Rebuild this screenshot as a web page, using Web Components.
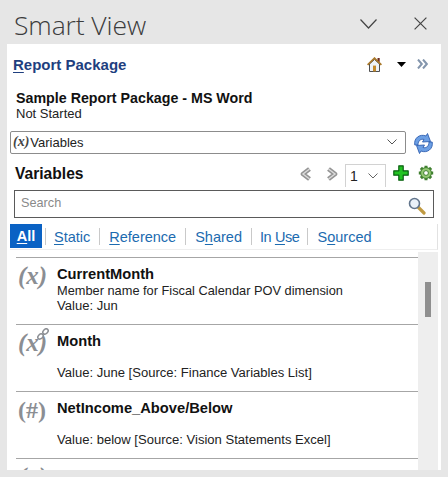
<!DOCTYPE html>
<html>
<head>
<meta charset="utf-8">
<title>Smart View</title>
<style>
  html, body { margin: 0; height: 100%; background: #e6e6e6; }
  body { font-family: 'Open Sans', 'Liberation Sans', sans-serif; overflow: hidden; }
</style>
</head>
<body>
<smart-view>
  <report-header slot="header" package="Sample Report Package - MS Word" status="Not Started"></report-header>
  <variable-combo slot="header"></variable-combo>
  <variables-toolbar slot="header"></variables-toolbar>
  <search-box slot="header"></search-box>
  <filter-tabs slot="header"></filter-tabs>
  <variable-list slot="list">
    <variable-row name="CurrentMonth" kind="x" description="Member name for Fiscal Calendar POV dimension" value="Value: Jun"></variable-row>
    <variable-row name="Month" kind="link" description="" value="Value: June [Source: Finance Variables List]"></variable-row>
    <variable-row name="NetIncome_Above/Below" kind="hash" description="" value="Value: below [Source: Vision Statements Excel]"></variable-row>
    <variable-row name="" kind="x" description="" value=""></variable-row>
  </variable-list>
</smart-view>

<script>
const uiFont = "'Liberation Sans', Arial, sans-serif"

const shellTemplate = document.createElement('template')
shellTemplate.innerHTML = `
  <style>
    :host { display: flex; flex-direction: column; width: 448px; height: 477px; overflow: hidden; }
    #bar { height: 44px; flex: none; display: flex; align-items: center; padding: 0 21px 0 14px; box-sizing: border-box; color: #3c3c3c; }
    #title { font: 300 26.500px/44px 'Open Sans', sans-serif; flex: 1; letter-spacing: -0.1px; padding-top: 3px; height: 44px; box-sizing: border-box; }
    #bar svg { display: block; }
    #collapse { margin-right: 37px; margin-top: 4px; }
    #close { margin-top: 2px; }
    #panel { flex: 1; margin: 0 7px 7px; background: #fff; display: flex; flex-direction: column; min-height: 0; }
    #lower { flex: 1; min-height: 0; display: flex; }
  </style>
  <div id="bar">
    <div id="title">Smart View</div>
    <svg id="collapse" width="17" height="10" viewBox="0 0 17 10"><path d="M.5.500 8.500 9 16.500.500" fill="none" stroke="#444" stroke-width="1.200"/></svg>
    <svg id="close" width="13" height="13" viewBox="0 0 13 13"><path d="M.6.600 12.400 12.400M12.400.600.600 12.400" fill="none" stroke="#444" stroke-width="1.200"/></svg>
  </div>
  <div id="panel">
    <slot name="header"></slot>
    <div id="lower"><slot name="list"></slot></div>
  </div>
`
customElements.define('smart-view', class extends HTMLElement {
  constructor () {
    super()
    this.attachShadow({ mode: 'open' }).appendChild(shellTemplate.content.cloneNode(true))
  }
})

const headerTemplate = document.createElement('template')
headerTemplate.innerHTML = `
  <style>
    :host { display: block; font-family: ${uiFont}; height: 86px; box-sizing: border-box; padding-top: 10px; }
    #top { display: flex; align-items: center; height: 20px; padding: 0 13px 0 6px; }
    #link { flex: 1; font-weight: 700; font-size: 15px; color: #1f3f7f; }
    #link u { text-decoration-thickness: 1px; text-underline-offset: 2px; }
    #home { margin-right: 15px; }
    #caret { margin-right: 11px; }
    #name { margin: 16px 0 0 9px; font-weight: 700; font-size: 14.250px; line-height: 16px; color: #111; white-space: nowrap; }
    #status { margin-left: 9px; font-size: 13px; line-height: 16px; color: #222; }
    svg { display: block; }
  </style>
  <div id="top">
    <div id="link"><u>R</u>eport Package</div>
    <svg id="home" width="15" height="15" viewBox="0 0 15 15">
      <path d="M2.500 7V14.500h10V7L7.500 2.500z" fill="#eef2f8" stroke="#3c3c3c" stroke-width=".9"/>
      <path d="M.6 7.800 7.500 1.200l6.900 6.600" fill="none" stroke="#a9782a" stroke-width="1.800"/>
      <path d="M10.500 1h2.200v4.200l-2.200-2z" fill="#6b2a20"/>
      <rect x="6" y="8.600" width="3" height="5.800" fill="#c48a2c"/>
    </svg>
    <svg id="caret" width="9" height="5" viewBox="0 0 9 5"><path d="M0 0h9L4.500 5z" fill="#000"/></svg>
    <svg width="11" height="10" viewBox="0 0 11 10"><path d="M1 .5 4.800 5 1 9.500M6 .5 9.800 5 6 9.500" fill="none" stroke="#8496ad" stroke-width="2"/></svg>
  </div>
  <div id="name"></div>
  <div id="status"></div>
`
customElements.define('report-header', class extends HTMLElement {
  constructor () {
    super()
    this.attachShadow({ mode: 'open' }).appendChild(headerTemplate.content.cloneNode(true))
    this.shadowRoot.querySelector('#name').textContent = this.getAttribute('package')
    this.shadowRoot.querySelector('#status').textContent = this.getAttribute('status')
  }
})

const comboTemplate = document.createElement('template')
comboTemplate.innerHTML = `
  <style>
    :host { display: flex; align-items: center; height: 24px; padding: 0 7px 0 3px; font-family: ${uiFont}; }
    #box { width: 396px; height: 23px; box-sizing: border-box; border: 1px solid #8c8c8c; border-radius: 2px; display: flex; align-items: center; padding: 0 8px 0 2px; font-size: 13px; color: #222; }
    #mark { font: italic 700 14px 'Liberation Serif', serif; color: #444; margin-right: 1px; }
    #text { flex: 1; }
    #refresh { margin-left: 7px; margin-top: 2px; }
    svg { display: block; }
  </style>
  <div id="box"><span id="mark">(x)</span><span id="text">Variables</span>
    <svg width="10" height="6" viewBox="0 0 10 6"><path d="M.5.500 5 5 9.500.500" fill="none" stroke="#555"/></svg>
  </div>
  <svg id="refresh" width="21" height="23" viewBox="0 0 21 23">
    <path d="M1.800 13C.5 6 7 1.500 13 4l1.500-2.500 3 8-8 .5L11 7.500C8 6.500 5 8.500 5 13z" fill="#6c9fe4" stroke="#2f5fb0" stroke-width=".9"/>
    <path d="M19.200 10c1.300 7-5.200 11.500-11.200 9L6.500 21.500l-3-8 8-.5L10 15.500c3 1 6-1 6-5.500z" fill="#6c9fe4" stroke="#2f5fb0" stroke-width=".9"/>
  </svg>
`
customElements.define('variable-combo', class extends HTMLElement {
  constructor () {
    super()
    this.attachShadow({ mode: 'open' }).appendChild(comboTemplate.content.cloneNode(true))
  }
})

const toolbarTemplate = document.createElement('template')
toolbarTemplate.innerHTML = `
  <style>
    :host { display: flex; align-items: center; height: 36px; padding: 4px 7px 0 8px; box-sizing: border-box; font-family: ${uiFont}; }
    #heading { flex: 1; font-weight: 700; font-size: 15.600px; color: #111; }
    #page { width: 41px; height: 23px; box-sizing: border-box; border: 1px solid #d2d2d2; border-bottom: 0; margin: 0 7px 3px 7px; align-self: flex-end; display: flex; align-items: center; justify-content: space-between; padding: 0 7px 0 4px; font-size: 14px; color: #222; }
    #next { margin-left: 14px; }
    #add { margin-top: -2px; }
    #gear { margin-left: 9px; margin-top: -2px; }
    svg { display: block; }
  </style>
  <div id="heading">Variables</div>
  <svg width="12" height="14" viewBox="0 0 12 14"><path d="M9.500 2 3 7l6.500 5" fill="none" stroke="#949494" stroke-width="4.600" stroke-linejoin="round"/><path d="M9.500 2 3 7l6.500 5" fill="none" stroke="#dcdcdc" stroke-width="1.400"/></svg>
  <svg id="next" width="12" height="14" viewBox="0 0 12 14"><path d="M2.500 2 9 7l-6.500 5" fill="none" stroke="#949494" stroke-width="4.600" stroke-linejoin="round"/><path d="M2.500 2 9 7l-6.500 5" fill="none" stroke="#dcdcdc" stroke-width="1.400"/></svg>
  <div id="page"><span>1</span><svg width="10" height="6" viewBox="0 0 10 6"><path d="M.5.500 5 5 9.500.500" fill="none" stroke="#666"/></svg></div>
  <svg id="add" width="16" height="16" viewBox="0 0 16 16"><path d="M5.800.8h4.400v5h5v4.400h-5v5H5.800v-5h-5V5.800h5z" fill="#22c322" stroke="#0b5f12" stroke-width="1.200" stroke-linejoin="round"/></svg>
  <svg id="gear" width="16" height="16" viewBox="0 0 16 16">
    <path d="M8 .8v14.400M.8 8h14.400M2.900 2.900l10.200 10.200M13.100 2.900 2.900 13.100" stroke="#3f7f2f" stroke-width="3"/>
    <circle cx="8" cy="8" r="5.400" fill="#93c873" stroke="#3f7f2f"/>
    <circle cx="8" cy="8" r="2.400" fill="#fff" stroke="#3f7f2f"/>
  </svg>
`
customElements.define('variables-toolbar', class extends HTMLElement {
  constructor () {
    super()
    this.attachShadow({ mode: 'open' }).appendChild(toolbarTemplate.content.cloneNode(true))
  }
})

const searchTemplate = document.createElement('template')
searchTemplate.innerHTML = `
  <style>
    :host { display: block; padding: 0 7px; font-family: ${uiFont}; }
    #box { height: 28px; box-sizing: border-box; border: 1px solid #5a5a5a; display: flex; justify-content: space-between; padding: 4px 7px 0 6px; font-size: 12.700px; color: #8a8a8a; }
    span { line-height: 16px; }
    svg { display: block; margin-top: 2px; }
  </style>
  <div id="box">
    <span>Search</span>
    <svg width="18" height="18" viewBox="0 0 18 18">
      <path d="M10.500 10.500l5.500 5.500" stroke="#c09a42" stroke-width="3.200" stroke-linecap="round"/>
      <circle cx="6.500" cy="6.500" r="5" fill="#eaf1f8" stroke="#62758c" stroke-width="1.600"/>
    </svg>
  </div>
`
customElements.define('search-box', class extends HTMLElement {
  constructor () {
    super()
    this.attachShadow({ mode: 'open' }).appendChild(searchTemplate.content.cloneNode(true))
  }
})

const tabsTemplate = document.createElement('template')
tabsTemplate.innerHTML = `
  <style>
    :host { display: flex; align-items: center; height: 26px; margin: 6px 3px 0; padding-right: 1px; box-sizing: border-box; border-bottom: 1px solid #eee; border-right: 1px solid #e2e2e2; font-family: ${uiFont}; font-size: 14.500px; color: #1c6bb0; }
    span { white-space: nowrap; }
    u { text-decoration-thickness: 1px; text-underline-offset: 2px; }
    #all { background: #0a62c4; color: #fff; font-weight: 700; width: 32px; height: 24px; line-height: 24px; text-align: center; align-self: flex-start; }
    i { width: 1px; height: 17px; background: #c9c9c9; margin: 0 9px; flex: none; }
    i:first-of-type { margin: 0 8px 0 3px; }
    #in-use { letter-spacing: -0.4px; margin-left: -1px; margin-right: -1px; }
  </style>
  <span id="all"><u>A</u>ll</span>
  <i></i><span><u>S</u>tatic</span>
  <i></i><span><u>R</u>eference</span>
  <i></i><span>S<u>h</u>ared</span>
  <i></i><span id="in-use">In <u>U</u>se</span>
  <i></i><span>S<u>o</u>urced</span>
`
customElements.define('filter-tabs', class extends HTMLElement {
  constructor () {
    super()
    this.attachShadow({ mode: 'open' }).appendChild(tabsTemplate.content.cloneNode(true))
  }
})

const listTemplate = document.createElement('template')
listTemplate.innerHTML = `
  <style>
    :host { display: flex; width: 100%; height: 100%; min-height: 0; overflow: hidden; font-family: ${uiFont}; }
    #rows { flex: 1; min-width: 0; padding: 7px 0 0 9px; overflow: hidden; box-sizing: border-box; }
    #track { width: 20px; flex: none; margin: 2px 3px 0 0; background: #eee; padding: 30px 0 0 7px; box-sizing: border-box; }
    #thumb { width: 6px; height: 35px; background: #8f8f8f; }
  </style>
  <div id="rows"><slot></slot></div>
  <div id="track"><div id="thumb"></div></div>
`
customElements.define('variable-list', class extends HTMLElement {
  constructor () {
    super()
    this.attachShadow({ mode: 'open' }).appendChild(listTemplate.content.cloneNode(true))
  }
})

const rowTemplate = document.createElement('template')
rowTemplate.innerHTML = `
  <style>
    :host { display: grid; grid-template-columns: 41px 1fr; height: 67px; box-sizing: border-box; border-top: 1px solid #a6a6a6; color: #222; font-size: 13px; }
    #icon { position: relative; font: italic 700 25px/28px 'Liberation Serif', serif; color: #8b8e93; padding: 4px 0 0 2px; white-space: nowrap; }
    #icon.hash { font-style: normal; font-size: 24px; }
    #icon svg { position: absolute; left: 21px; top: 3px; }
    #name { font-weight: 700; font-size: 14.700px; line-height: 18px; color: #111; margin-top: 7px; height: 18px; white-space: nowrap; }
    #desc { line-height: 15px; height: 15px; font-size: 12.800px; }
    #value { line-height: 16px; font-size: 13.050px; }
  </style>
  <div id="icon"></div>
  <div>
    <div id="name"></div>
    <div id="desc"></div>
    <div id="value"></div>
  </div>
`
customElements.define('variable-row', class extends HTMLElement {
  constructor () {
    super()
    this.attachShadow({ mode: 'open' }).appendChild(rowTemplate.content.cloneNode(true))
    const icon = this.shadowRoot.querySelector('#icon')
    const kind = this.getAttribute('kind')
    icon.textContent = kind === 'hash' ? '(#)' : '(x)'
    icon.classList.toggle('hash', kind === 'hash')
    if (kind === 'link') {
      // small chain link over the corner of the mark
      icon.insertAdjacentHTML('beforeend', '<svg width="12" height="12" viewBox="0 0 12 12"><g fill="#fff" stroke="#8b8e93" stroke-width="1.500"><ellipse cx="3.500" cy="8.500" rx="3" ry="2.200" transform="rotate(-45 3.500 8.500)"/><ellipse cx="8.500" cy="3.500" rx="3" ry="2.200" transform="rotate(-45 8.500 3.500)"/></g></svg>')
    }
    this.shadowRoot.querySelector('#name').textContent = this.getAttribute('name')
    this.shadowRoot.querySelector('#desc').textContent = this.getAttribute('description')
    this.shadowRoot.querySelector('#value').textContent = this.getAttribute('value')
  }
})
</script>
</body>
</html>
